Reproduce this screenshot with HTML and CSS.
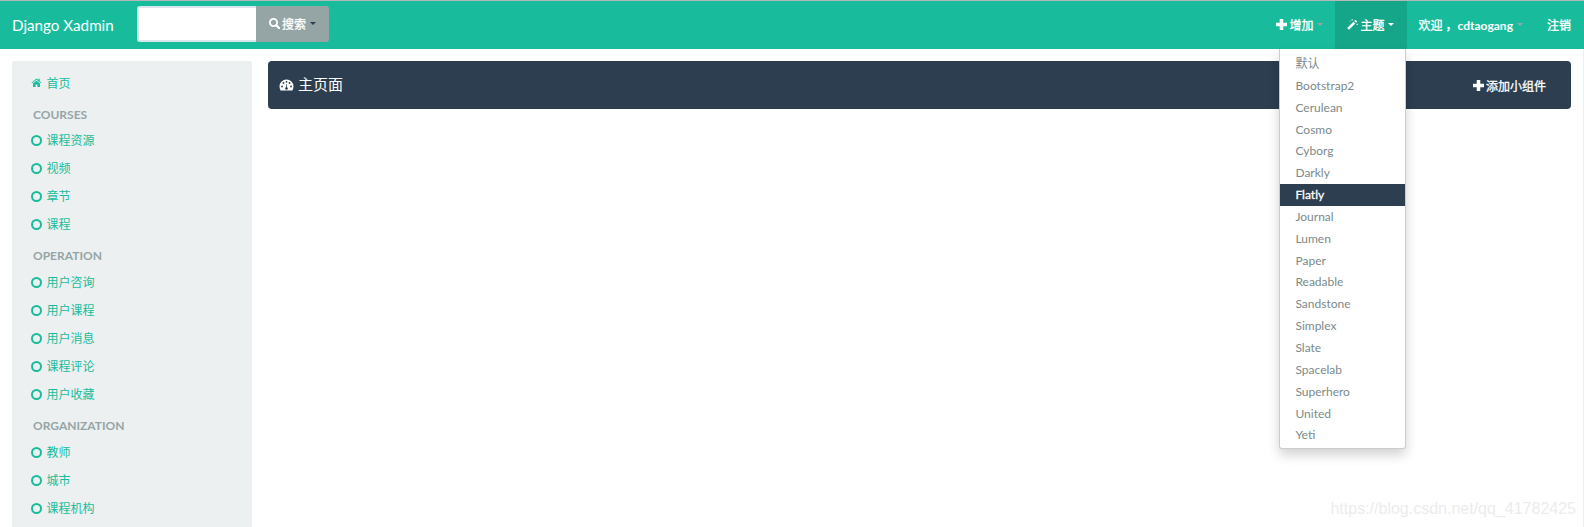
FILE: index.html
```html
<!DOCTYPE html>
<html lang="en">

<head>
    <meta charset="UTF-8">
    <meta name="viewport" content="width=device-width, initial-scale=1.0">
    <title>Django Xadmin</title>
    <link rel="stylesheet" href="styles.css">
</head>

<body>

    <nav class="navbar">
        <a class="brand">Django Xadmin</a>
        <form class="search">
            <input class="search-input" type="text">
            <button class="search-btn" type="button">
                <svg class="icon" viewBox="0.5 0.5 11 11"><circle cx="5" cy="5" r="3.6" fill="none" stroke="currentColor" stroke-width="1.8"/><path d="M7.6 7.6L11 11" stroke="currentColor" stroke-width="2.2" stroke-linecap="round"/></svg>
                <span>搜索</span><span class="caret caret-dark"></span>
            </button>
        </form>
        <ul class="nav-right">
            <li class="nav-item">
                <svg class="icon" viewBox="1 1 10 10"><path d="M4.400 1h3.200v3.400H11v3.200H7.600V11H4.400V7.600H1V4.400h3.400z" fill="currentColor"/></svg>
                <span>增加</span><span class="caret caret-muted"></span>
            </li>
            <li class="nav-item active">
                <svg class="icon" viewBox="0 0 12 12"><path d="M0.200 9.800L7 3l2 2-6.800 6.800z" fill="currentColor"/><path d="M7.800 2.200L9.200 0.800l2 2L9.800 4.200z" fill="currentColor"/><path d="M5 0.300h1.200v1.200H5zM10.500 5.300h1.200v1.200h-1.200zM3 1.800h1v1H3z" fill="currentColor"/></svg>
                <span>主题</span><span class="caret"></span>
                <ul class="dropdown">
                    <li>默认</li>
                    <li>Bootstrap2</li>
                    <li>Cerulean</li>
                    <li>Cosmo</li>
                    <li>Cyborg</li>
                    <li>Darkly</li>
                    <li class="selected">Flatly</li>
                    <li>Journal</li>
                    <li>Lumen</li>
                    <li>Paper</li>
                    <li>Readable</li>
                    <li>Sandstone</li>
                    <li>Simplex</li>
                    <li>Slate</li>
                    <li>Spacelab</li>
                    <li>Superhero</li>
                    <li>United</li>
                    <li>Yeti</li>
                </ul>
            </li>
            <li class="nav-item nav-user">
                <span>欢迎 ，<b class="user">cdtaogang</b></span><span class="caret caret-muted"></span>
            </li>
            <li class="nav-item">注销</li>
        </ul>
    </nav>

    <div class="page">
        <aside class="side-menu">
            <a class="menu-item">
                <svg class="menu-icon" viewBox="0 0 12 12"><path d="M6 1.500L0.500 6.200l.7.7L6 2.900l4.800 4 .7-.7L9.500 4.500V2H8v1.200z" fill="currentColor"/><path d="M2.200 7.200L6 4l3.800 3.200V11H7V8.200H5V11H2.200z" fill="currentColor"/></svg>
                <span>首页</span>
            </a>

            <div class="menu-title">COURSES</div>
            <a class="menu-item"><i class="dot"></i><span>课程资源</span></a>
            <a class="menu-item"><i class="dot"></i><span>视频</span></a>
            <a class="menu-item"><i class="dot"></i><span>章节</span></a>
            <a class="menu-item"><i class="dot"></i><span>课程</span></a>

            <div class="menu-title">OPERATION</div>
            <a class="menu-item"><i class="dot"></i><span>用户咨询</span></a>
            <a class="menu-item"><i class="dot"></i><span>用户课程</span></a>
            <a class="menu-item"><i class="dot"></i><span>用户消息</span></a>
            <a class="menu-item"><i class="dot"></i><span>课程评论</span></a>
            <a class="menu-item"><i class="dot"></i><span>用户收藏</span></a>

            <div class="menu-title">ORGANIZATION</div>
            <a class="menu-item"><i class="dot"></i><span>教师</span></a>
            <a class="menu-item"><i class="dot"></i><span>城市</span></a>
            <a class="menu-item"><i class="dot"></i><span>课程机构</span></a>
        </aside>

        <main class="content">
            <div class="page-head">
                <h1 class="page-title">
                    <svg class="gauge" viewBox="0 0 15 12"><path d="M7.500 0.500A7 7 0 0 0 0.500 7.500c0 1.500.4 2.800 1.100 4h11.800c.7-1.200 1.100-2.500 1.100-4A7 7 0 0 0 7.500 0.500z" fill="currentColor"/><g fill="#2c3e50"><circle cx="3" cy="7.500" r=".9"/><circle cx="4.500" cy="4" r=".9"/><circle cx="7.500" cy="2.800" r=".9"/><circle cx="10.500" cy="4" r=".9"/><circle cx="12" cy="7.500" r=".9"/><circle cx="7.500" cy="9.500" r="1.300"/><path d="M7 9.500L7.300 5h.5L8 9.500z"/></g></svg>
                    <span>主页面</span>
                </h1>
                <a class="add-widget">
                    <svg class="icon" viewBox="1 1 10 10"><path d="M4.400 1h3.200v3.400H11v3.200H7.600V11H4.400V7.600H1V4.400h3.400z" fill="currentColor"/></svg>
                    <span>添加小组件</span>
                </a>
            </div>
        </main>
    </div>

    <div class="watermark">https://blog.csdn.net/qq_41782425</div>

</body>

</html>
```

FILE: styles.css
```css
/* base */

* {
    box-sizing: border-box;
}

html, body {
    height: 100%;
}

body {
    margin: 0;
    overflow: hidden;
    background: #fff;
    border-top: 1px solid #b4b8b8;
    font-family: Lato, "Noto Sans CJK SC", sans-serif;
    font-size: 12px;
    color: #2c3e50;
}

ul {
    list-style: none;
    margin: 0;
    padding: 0;
}

.icon {
    width: 11px;
    height: 11px;
    flex: none;
}

.caret {
    width: 0;
    height: 0;
    margin-left: 2px;
    border-top: 3px solid #fff;
    border-left: 3px solid transparent;
    border-right: 3px solid transparent;
}

.caret-dark {
    border-top-color: #2c3e50;
}

.caret-muted {
    border-top-color: #95a5a6;
}

/* navbar */

.navbar {
    display: flex;
    align-items: center;
    height: 48px;
    background: #18bc9c;
    color: #fff;
}

.brand {
    width: 137px;
    padding-left: 12px;
    font-size: 15.2px;
}

.search {
    display: flex;
    height: 36px;
    margin-top: -2px;
}

.search-input {
    width: 119px;
    height: 36px;
    padding: 0 8px;
    border: 2px solid #dce4ec;
    border-right: none;
    border-radius: 3px 0 0 3px;
    outline: none;
    background: #fff;
}

.search-btn {
    display: flex;
    align-items: center;
    gap: 2px;
    width: 73px;
    padding: 0 0 2px 13px;
    border: none;
    border-radius: 0 3px 3px 0;
    background: #95a5a6;
    color: #fff;
    font: inherit;
    -webkit-text-stroke: 0.3px;
}

.nav-right {
    display: flex;
    height: 48px;
    margin-left: auto;
    margin-right: 1px;
}

.nav-item {
    position: relative;
    display: flex;
    align-items: center;
    gap: 2px;
    padding: 0 12px 2px;
    -webkit-text-stroke: 0.3px;
}

.nav-item.active {
    padding-right: 13px;
    background: #15a589;
}

.nav-user {
    padding-left: 11px;
    padding-right: 12px;
}

.user {
    font-weight: 700;
    -webkit-text-stroke: 0;
}

/* theme menu */

.dropdown {
    position: absolute;
    top: 48px;
    left: -56px;
    width: 127px;
    padding: 4px 0 2px;
    background: #fff;
    border: 1px solid rgba(0, 0, 0, 0.2);
    border-top: none;
    border-radius: 0 0 3px 3px;
    box-shadow: 0 6px 12px rgba(0, 0, 0, 0.175);
    color: #7b8a8b;
    z-index: 10;
    -webkit-text-stroke: 0;
}

.dropdown li {
    height: 21.85px;
    padding-left: 15px;
    line-height: 21.85px;
}

.dropdown .selected {
    background: #2c3e50;
    color: #fff;
    -webkit-text-stroke: 0.3px;
}

/* page */

.page {
    display: flex;
    gap: 16px;
    height: 478px;
    padding: 12px 12px 0 12px;
    border-right: 1px solid #f0f0f0;
}

.side-menu {
    flex: none;
    width: 240px;
    height: 480px;
    padding-top: 7.2px;
    background: #ecf0f1;
    border-radius: 3px 3px 0 0;
}

.menu-item {
    display: flex;
    align-items: center;
    gap: 4.500px;
    height: 28px;
    padding-left: 19px;
    color: #18bc9c;
}

.menu-icon {
    width: 11px;
    height: 11px;
}

.dot {
    width: 11px;
    height: 11px;
    margin-top: 1px;
    border: 2px solid #18bc9c;
    border-radius: 50%;
}

.menu-title {
    height: 29.8px;
    padding: 10.5px 0 0 21px;
    line-height: 16px;
    font-weight: 700;
    color: #95a5a6;
}

.content {
    flex: 1;
}

.page-head {
    display: flex;
    align-items: center;
    justify-content: space-between;
    height: 48px;
    padding: 0 25px 0 11px;
    background: #2c3e50;
    border-radius: 4px;
    color: #fff;
}

.page-title {
    display: flex;
    align-items: center;
    gap: 4px;
    margin: 0 0 3px;
    font-size: 15px;
    font-weight: 400;
}

.gauge {
    width: 15px;
    height: 12px;
    margin-top: 2px;
}

.add-widget {
    display: flex;
    align-items: center;
    gap: 2px;
    -webkit-text-stroke: 0.3px;
}

.watermark {
    position: absolute;
    right: 8px;
    bottom: 9px;
    font-family: "Liberation Sans", sans-serif;
    font-size: 16px;
    color: #ececec;
}
```
